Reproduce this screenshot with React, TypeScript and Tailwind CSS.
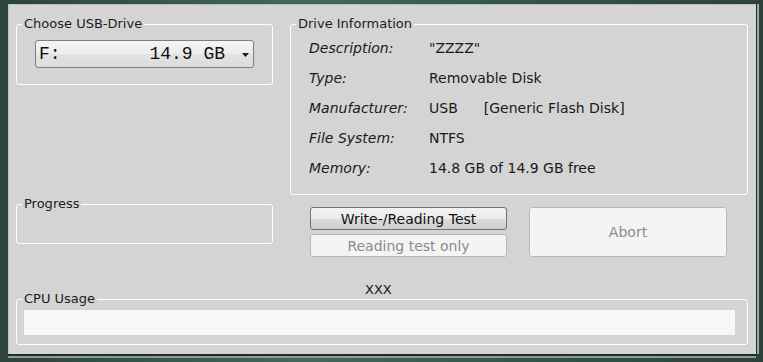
import type { ReactNode } from "react";

function Group({ title, className, children }: { title: string; className?: string; children?: ReactNode }) {
  return (
    <fieldset className={`border border-white rounded-[3px] ${className ?? ""}`}>
      <legend className="ml-[5px] px-[2px] text-[13px] leading-[16px] text-[#1c1c1c]">{title}</legend>
      {children}
    </fieldset>
  );
}

const info: [string, ReactNode][] = [
  ["Description:", '"ZZZZ"'],
  ["Type:", "Removable Disk"],
  [
    "Manufacturer:",
    <>
      USB<span className="ml-[26px]">[Generic Flash Disk]</span>
    </>,
  ],
  ["File System:", "NTFS"],
  ["Memory:", "14.8 GB of 14.9 GB free"],
];

export default function App() {
  return (
    <div className="w-[763px] h-[362px] overflow-hidden bg-[linear-gradient(90deg,#2b433a,#45675b_40%,#34524a_70%,#2b433a)] pl-[8px] pt-[4px] font-['DejaVu_Sans',Verdana,sans-serif] text-[#1a1a1a]">
      <div className="w-[748px] h-[350px] bg-[#d4d4d4] border-l border-t border-[#b9c2be] shadow-[1px_0_0_#1f2d28,3px_0_0_#9ea7a3,0_2px_0_#1f2d28,0_4px_0_#8f9a95] pl-[7px] pt-[11px]">
        {/* top row */}
        <div className="flex">
          <div className="w-[257px]">
            <Group title="Choose USB-Drive" className="h-[69px]">
              <div className="mt-[8px] ml-[18px] w-[219px] h-[28px] flex items-center border border-[#7f7f7f] rounded-[3px] bg-[linear-gradient(#f5f5f5,#ececec_50%,#e3e3e3_51%,#dcdcdc)] pl-[3px] pr-[4px] font-['Liberation_Mono',monospace] text-[18px] leading-[20px] text-[#111]">
                <span>F:</span>
                <span className="ml-auto mr-[17px]">14.9 GB</span>
                <svg width="7" height="4" viewBox="0 0 7 4" className="mt-[2px]">
                  <path d="M0 0H7L3.5 4Z" fill="#1a1a1a" />
                </svg>
              </div>
            </Group>
            <Group title="Progress" className="mt-[111px] h-[48px]" />
          </div>

          <div className="ml-[17px] w-[458px]">
            <Group title="Drive Information" className="h-[179px]">
              <div className="pt-[1px] pl-[18px]">
                {info.map(([label, value]) => (
                  <div key={label} className="flex h-[30px] text-[14px] leading-[30px]">
                    <span className="w-[120px] italic">{label}</span>
                    <span>{value}</span>
                  </div>
                ))}
              </div>
            </Group>

            <div className="mt-[12px] ml-[20px] flex text-[14px]">
              <div className="flex flex-col gap-[4px]">
                <button className="w-[197px] h-[23px] border border-[#707070] rounded-[3px] bg-[linear-gradient(#f2f2f2,#ebebeb_50%,#dddddd_51%,#cfcfcf)] leading-[20px] text-[#111]">
                  Write-/Reading Test
                </button>
                <button disabled className="w-[197px] h-[23px] border border-[#b5b8ba] rounded-[3px] bg-[#f4f4f4] leading-[20px] text-[#8b8b8b]">
                  Reading test only
                </button>
              </div>
              <button disabled className="ml-[22px] w-[198px] h-[50px] border border-[#b5b8ba] rounded-[3px] bg-[#f4f4f4] text-[#8b8b8b]">
                Abort
              </button>
            </div>
          </div>
        </div>

        <div className="mt-[25px] pl-[349px] text-[13px] leading-[16px]">XXX</div>

        <Group title="CPU Usage" className="-mt-[7px] w-[732px] h-[54px]">
          <div className="mt-[3px] ml-[7px] w-[711px] h-[25px] bg-[#f7f7f7]" />
        </Group>
      </div>
    </div>
  );
}
